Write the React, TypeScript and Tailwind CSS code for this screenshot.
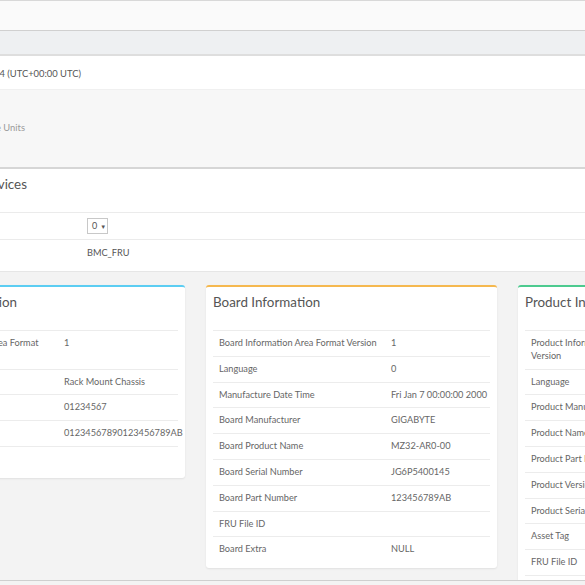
import React from "react";

// ---------------------------------------------------------------------------
// Data
// ---------------------------------------------------------------------------

interface Row {
  label: React.ReactNode;
  value: string;
}

interface Card {
  title: string;
  accent: string;
  labelWidth: string;
  rows: Row[];
}

const cards: Card[] = [
  {
    title: "Chassis Information",
    accent: "border-t-[#5ccdf2]",
    labelWidth: "w-[157px]",
    rows: [
      { label: <>Chassis Information Area Format<br />Version</>, value: "1" },
      { label: "Chassis Type", value: "Rack Mount Chassis" },
      { label: "Chassis Part Number", value: "01234567" },
      { label: "Chassis Serial Number", value: "01234567890123456789AB" },
      { label: "Chassis Extra", value: "" },
    ],
  },
  {
    title: "Board Information",
    accent: "border-t-[#f5b84f]",
    labelWidth: "w-[172px]",
    rows: [
      { label: "Board Information Area Format Version", value: "1" },
      { label: "Language", value: "0" },
      { label: "Manufacture Date Time", value: "Fri Jan 7 00:00:00 2000" },
      { label: "Board Manufacturer", value: "GIGABYTE" },
      { label: "Board Product Name", value: "MZ32-AR0-00" },
      { label: "Board Serial Number", value: "JG6P5400145" },
      { label: "Board Part Number", value: "123456789AB" },
      { label: "FRU File ID", value: "" },
      { label: "Board Extra", value: "NULL" },
    ],
  },
  {
    title: "Product Information",
    accent: "border-t-[#4dca8f]",
    labelWidth: "w-[160px]",
    rows: [
      { label: <>Product Information Area Format<br />Version</>, value: "1" },
      { label: "Language", value: "0" },
      { label: "Product Manufacturer", value: "GIGABYTE" },
      { label: "Product Name", value: "R272-Z32-00" },
      { label: "Product Part Number", value: "01234567" },
      { label: "Product Version", value: "0100" },
      { label: "Product Serial Number", value: "01234567890123456789AB" },
      { label: "Asset Tag", value: "01234567890123456789AB" },
      { label: "FRU File ID", value: "" },
      { label: "Product Extra", value: "NULL" },
    ],
  },
];

// ---------------------------------------------------------------------------
// Info card
// ---------------------------------------------------------------------------

function InfoCard({ card }: { card: Card }) {
  return (
    <div
      className={`w-[291px] shrink-0 self-start bg-white rounded-[3px] border-t-[2px] ${card.accent} shadow-[0_1px_2px_rgba(0,0,0,0.08)] px-[7px] pb-[6px]`}
    >
      <div className="h-[43px] pt-[5px] text-[13.4px] leading-[20px] text-[#555] whitespace-nowrap">{card.title}</div>
      <div className="border-t border-[#ececec]">
        {card.rows.map((row, i) => (
          <div
            key={i}
            className={`flex text-[9.2px] leading-[12.8px] text-[#666] ${i > 0 ? "border-t border-[#ececec]" : ""}`}
          >
            <div className={`${card.labelWidth} shrink-0 px-[6px] py-[6px] whitespace-nowrap`}>{row.label}</div>
            <div className="flex-1 px-[6px] py-[6px] whitespace-nowrap">{row.value}</div>
          </div>
        ))}
      </div>
    </div>
  );
}

// ---------------------------------------------------------------------------
// App
// ---------------------------------------------------------------------------

export default function App() {
  return (
    <div className="w-[585px] h-[585px] overflow-hidden bg-[#f3f3f3] font-['Lato','Liberation_Sans',sans-serif]">
      <div className="h-[581px] overflow-hidden border-b border-[#cfcfcf]">
        <div className="-ml-[106px] w-[1000px]">
          {/* Top bars */}
          <div className="h-[31px] bg-[#fafafa] border-t border-[#d8d8d8] border-b border-b-[#d0d0d0]" />
          <div className="h-[25px] bg-[#eef0f2] border-b-2 border-[#dedede]" />

          {/* System time */}
          <div className="h-[34px] bg-white flex items-center pt-[3px] border-b border-[#f0f0f0]">
            <div className="w-[187px] text-right text-[9.4px] text-[#555] whitespace-nowrap">
              2000-01-07 00:12:04 (UTC+00:00 UTC)
            </div>
          </div>

          {/* Units */}
          <div className="h-[79px] bg-[#f7f7f7] flex items-center border-b-2 border-[#d6d6d6]">
            <div className="w-[131px] text-right text-[9.4px] text-[#9a9a9a] whitespace-nowrap">
              Field Replaceable Units
            </div>
          </div>

          {/* FRU devices */}
          <div className="bg-white pb-[6px] border-b border-[#e6e6e6]">
            <div className="h-[43px] pt-[5px]">
              <div className="w-[133px] text-right text-[13.4px] leading-[20px] text-[#555] whitespace-nowrap">
                Available FRU Devices
              </div>
            </div>
            <div className="flex items-center h-[27px] border-t border-[#ebebeb] text-[9.2px] text-[#555]">
              <div className="w-[193px] shrink-0 text-right pr-[92px] whitespace-nowrap">FRU Device ID</div>
              <div className="flex items-center gap-[3px] h-[16px] w-[21px] border border-[#c8c8c8] pl-[4px] text-[9px]">
                <span>0</span>
                <span className="text-[6px]">▼</span>
              </div>
            </div>
            <div className="flex items-center h-[26px] border-t border-[#ebebeb] text-[9.2px] text-[#555]">
              <div className="w-[193px] shrink-0 text-right pr-[92px] whitespace-nowrap">FRU Device Name</div>
              <div>BMC_FRU</div>
            </div>
          </div>

          {/* Cards */}
          <div className="flex gap-[21px] pt-[13px] items-start">
            {cards.map((c) => (
              <InfoCard key={c.title} card={c} />
            ))}
          </div>
        </div>
      </div>
    </div>
  );
}
